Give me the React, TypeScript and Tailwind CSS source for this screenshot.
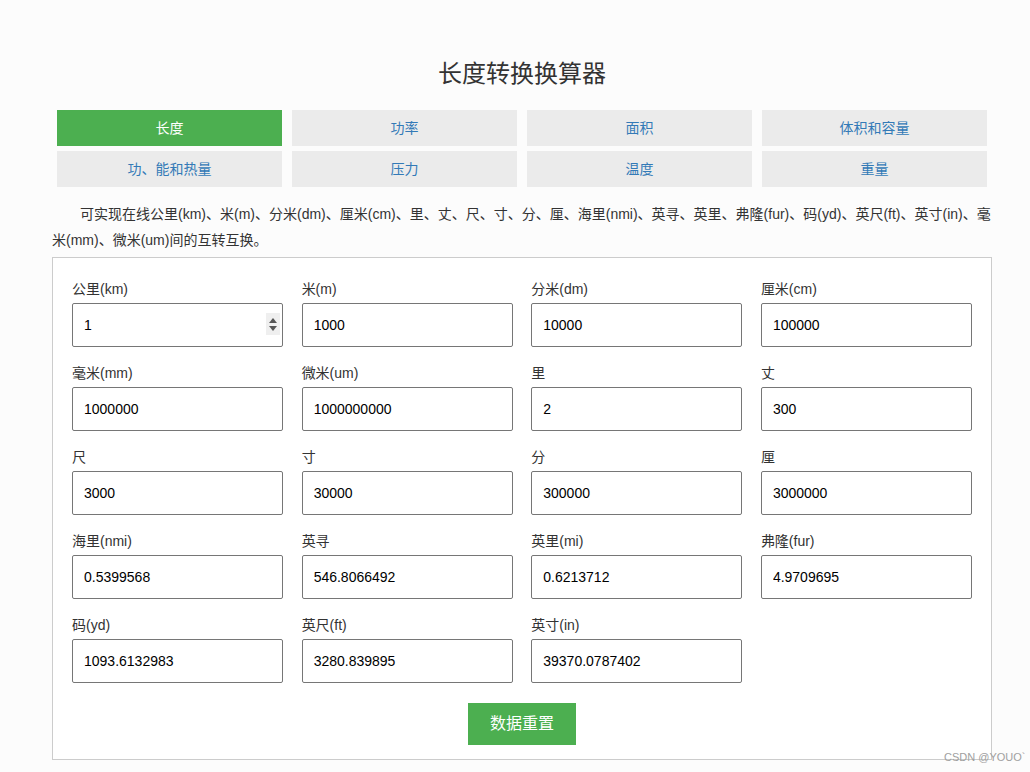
import React, { useState } from "react";

const tabs = [
  "长度",
  "功率",
  "面积",
  "体积和容量",
  "功、能和热量",
  "压力",
  "温度",
  "重量",
];

const initialFields = [
  { label: "公里(km)", value: "1" },
  { label: "米(m)", value: "1000" },
  { label: "分米(dm)", value: "10000" },
  { label: "厘米(cm)", value: "100000" },
  { label: "毫米(mm)", value: "1000000" },
  { label: "微米(um)", value: "1000000000" },
  { label: "里", value: "2" },
  { label: "丈", value: "300" },
  { label: "尺", value: "3000" },
  { label: "寸", value: "30000" },
  { label: "分", value: "300000" },
  { label: "厘", value: "3000000" },
  { label: "海里(nmi)", value: "0.5399568" },
  { label: "英寻", value: "546.8066492" },
  { label: "英里(mi)", value: "0.6213712" },
  { label: "弗隆(fur)", value: "4.9709695" },
  { label: "码(yd)", value: "1093.6132983" },
  { label: "英尺(ft)", value: "3280.839895" },
  { label: "英寸(in)", value: "39370.0787402" },
];

function Spinner() {
  return (
    <span className="absolute right-[3px] top-[10px] flex h-[22px] w-[14px] flex-col items-center justify-center gap-[3px] bg-[#efefef]">
      <svg width="8" height="5" viewBox="0 0 8 5">
        <path d="M4 0 L8 5 L0 5 Z" fill="#555" />
      </svg>
      <svg width="8" height="5" viewBox="0 0 8 5">
        <path d="M0 0 L8 0 L4 5 Z" fill="#555" />
      </svg>
    </span>
  );
}

export default function App() {
  const [active, setActive] = useState(0);
  const [fields, setFields] = useState(initialFields);

  const handleReset = () => setFields(initialFields);

  return (
    <div
      className="min-h-screen bg-[#fcfcfc] text-[14px] text-[#333]"
      style={{ fontFamily: '"Liberation Sans", "Noto Sans CJK SC", sans-serif' }}
    >
      <div className="relative ml-[52px] w-[940px] pt-[56px]">
        {/* Title */}
        <h1 className="text-center text-[24px] leading-[36px] font-normal text-[#333]">
          长度转换换算器
        </h1>

        {/* Tabs */}
        <div className="mt-[18px] grid grid-cols-4 gap-x-[10px] gap-y-[5px] px-[5px]">
          {tabs.map((tab, i) => (
            <button
              key={tab}
              onClick={() => setActive(i)}
              className={
                i === active
                  ? "h-[36px] bg-[#4caf50] text-center leading-[36px] text-white"
                  : "h-[36px] bg-[#ebebeb] text-center leading-[36px] text-[#337ab7]"
              }
            >
              {tab}
            </button>
          ))}
        </div>

        {/* Description */}
        <p className="mt-[14px] indent-[28px] leading-[26px] text-[#333]">
          可实现在线公里(km)、米(m)、分米(dm)、厘米(cm)、里、丈、尺、寸、分、厘、海里(nmi)、英寻、英里、弗隆(fur)、码(yd)、英尺(ft)、英寸(in)、毫米(mm)、微米(um)间的互转互换。
        </p>

        {/* Converter box */}
        <div className="mt-[4px] border border-[#ccc] bg-white px-[19px] pt-[21px] pb-[14px]">
          <div className="grid grid-cols-4 gap-x-[18.5px] gap-y-4">
            {fields.map((f, i) => (
              <div key={f.label}>
                <div className="mb-1 leading-5 text-[#333]">{f.label}</div>
                <div className="relative">
                  <input
                    value={f.value}
                    onChange={(e) => {
                      const next = [...fields];
                      next[i] = { ...f, value: e.target.value };
                      setFields(next);
                    }}
                    className="h-[44px] w-full rounded-[2px] border border-[#767676] bg-white pl-[11px] text-[14px] text-black outline-none"
                  />
                  {i === 0 && <Spinner />}
                </div>
              </div>
            ))}
          </div>

          <div className="mt-5 flex justify-center">
            <button
              onClick={handleReset}
              className="h-[42px] w-[108px] bg-[#4caf50] text-[16px] text-white"
            >
              数据重置
            </button>
          </div>
        </div>
      </div>

      {/* Watermark */}
      <span className="absolute top-[751px] left-[944px] text-[11px] leading-[12px] text-[#a0a0a0]">
        CSDN @YOUO`
      </span>
    </div>
  );
}
